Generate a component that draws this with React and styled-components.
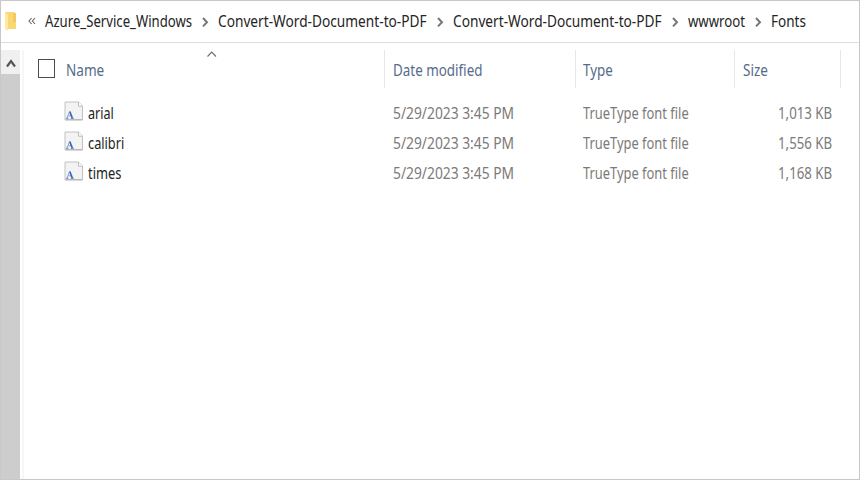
import React, { useLayoutEffect, useRef, useState } from "react";
import styled, { createGlobalStyle } from "styled-components";

const GlobalStyle = createGlobalStyle`
  * { box-sizing: border-box; }
  body { margin: 0; background: #fff; }
`;

const Window = styled.main`
  width: 860px;
  height: 480px;
  display: flex;
  flex-direction: column;
  overflow: hidden;
  background: #fff;
  border: 1px solid #c8c8c8;
  font-family: "Noto Sans", "Open Sans", sans-serif;
  font-size: 16.8px;
  line-height: 22px;
`;

const AddressBar = styled.nav`
  height: 42px;
  flex: none;
  display: flex;
  align-items: center;
  padding: 0 0 2px 4px;
  border-bottom: 1px solid #dedede;
  color: #242424;
`;

const FolderIcon = styled.svg`
  width: 12px;
  height: 20px;
  flex: none;
  margin-right: 11px;
`;

const Overflow = styled.svg`
  width: 8px;
  height: 8px;
  flex: none;
  margin-right: 9px;
`;

const Separator = styled.svg`
  width: 26px;
  height: 12px;
  flex: none;
  margin-top: 2px;
`;

const Body = styled.div`
  flex: 1;
  display: flex;
  padding-top: 7px;
`;

const ScrollTrack = styled.aside`
  width: 19px;
  flex: none;
  display: flex;
  flex-direction: column;
  background: #cdcdcd;
`;

const ScrollButton = styled.div`
  height: 24px;
  flex: none;
  display: flex;
  align-items: center;
  justify-content: center;
  padding-top: 2px;
  background: #f0f0f0;
`;

const Listing = styled.section`
  flex: 1;
  margin-left: 2px;
  border-left: 2px solid #f7f7f7;
`;

const columns = "361px 190.5px 159.5px 106px";

const Header = styled.div`
  height: 38px;
  display: grid;
  grid-template-columns: ${columns};
  color: #566c8a;
`;

const HeaderCell = styled.div`
  display: flex;
  align-items: center;
  padding: 1px 0 0 7.5px;
  border-right: 1px solid #e6e6e6;
`;

const NameHeader = styled(HeaderCell)`
  position: relative;
  padding-left: 14px;
`;

const Checkbox = styled.span`
  width: 17px;
  height: 19px;
  margin: -2px 10.5px 0 0;
  border: 1px solid #4d4d4d;
  background: #fff;
`;

const SortArrow = styled.svg`
  position: absolute;
  left: 182px;
  top: 0;
  width: 12px;
  height: 8px;
`;

const Rows = styled.div`
  padding-top: 10px;
`;

const Row = styled.div`
  height: 30px;
  display: grid;
  grid-template-columns: ${columns};
  align-items: center;
  color: #7c7a78;
`;

const FileName = styled.div`
  display: flex;
  align-items: center;
  padding-left: 40px;
  color: #242424;
`;

const FileIcon = styled.svg`
  width: 20px;
  height: 20px;
  margin: -5px 4px 0 0;
`;

const Cell = styled.div`
  display: flex;
  padding-left: 7.5px;
`;

const SizeCell = styled(Cell)`
  justify-content: flex-end;
  padding-right: 9px;
`;

const LabelBox = styled.span`
  display: block;
  flex: none;
  width: ${(p) => p.$width}px;
  height: 22px;
  white-space: nowrap;
`;

const LabelText = styled.span`
  display: inline-block;
  transform-origin: 0 50%;
`;

/* Condenses a label horizontally so that it fills its given width. */
function Label({ width, children }) {
  const ref = useRef(null);
  const [scale, setScale] = useState(1);
  useLayoutEffect(() => {
    setScale(width / ref.current.offsetWidth);
  }, [width, children]);
  return (
    <LabelBox $width={width}>
      <LabelText ref={ref} style={{ transform: `scaleX(${scale})` }}>{children}</LabelText>
    </LabelBox>
  );
}

const crumbs = [
  ["Azure_Service_Windows", 147.4],
  ["Convert-Word-Document-to-PDF", 208.8],
  ["Convert-Word-Document-to-PDF", 208.8],
  ["wwwroot", 57.4],
  ["Fonts", 34.6],
];

const files = [
  ["arial", 25.5, "1,013 KB"],
  ["calibri", 36.5, "1,556 KB"],
  ["times", 33.7, "1,168 KB"],
];

function FontFile() {
  return (
    <FileIcon viewBox="0 0 20 20">
      <path d="M1 1H14.5L18.5 5V19H1Z" fill="#f3f3f3" stroke="#c2c2c2" />
      <path d="M1.5 18.7H18.5" stroke="#b2b2b2" />
      <path d="M14.5 1V5.2H18.5" fill="#fff" stroke="#bcbcbc" />
      <path d="M3 17L5.6 10.5M4.2 14.8H7.6" fill="none" stroke="#86a3d8" />
      <path d="M5.8 10.5L8.3 17" fill="none" stroke="#3968bd" strokeWidth="1.7" />
      <path d="M2.2 17.3H4.3M6.8 17.3H9.8" fill="none" stroke="#5079c4" />
    </FileIcon>
  );
}

export default function App() {
  return (
    <>
      <GlobalStyle />
      <Window>
        <AddressBar>
          <FolderIcon viewBox="0 0 12 20">
            <path d="M0 1H9L11 3V18H3L0 16Z" fill="#f8d775" />
            <path d="M8 2H11V11H8Z" fill="#f2ca5e" />
            <path d="M0 1L3 4V20L0 18Z" fill="#ffe9a2" />
          </FolderIcon>
          <Overflow viewBox="0 0 8 8">
            <path d="M3.6 1L1 4L3.6 7M7 1L4.4 4L7 7" fill="none" stroke="#666" strokeWidth="1.1" />
          </Overflow>
          {crumbs.map(([name, width], i) => (
            <React.Fragment key={i}>
              {i > 0 && (
                <Separator viewBox="0 0 26 12">
                  <path d="M11 2L15 6.2L11 10.4" fill="none" stroke="#777" strokeWidth="2" />
                </Separator>
              )}
              <Label width={width}>{name}</Label>
            </React.Fragment>
          ))}
        </AddressBar>
        <Body>
          <ScrollTrack>
            <ScrollButton>
              <svg width="12" height="12" viewBox="0 0 12 12">
                <path d="M2 9.5L6 4L10 9.5" fill="none" stroke="#555" strokeWidth="2.2" />
              </svg>
            </ScrollButton>
          </ScrollTrack>
          <Listing>
            <Header>
              <NameHeader>
                <Checkbox />
                <Label width={38}>Name</Label>
                <SortArrow viewBox="0 0 12 8">
                  <path d="M1.5 6.5L5.7 2L10 6.5" fill="none" stroke="#6c6c6c" strokeWidth="1.1" />
                </SortArrow>
              </NameHeader>
              <HeaderCell><Label width={89.5}>Date modified</Label></HeaderCell>
              <HeaderCell><Label width={29.5}>Type</Label></HeaderCell>
              <HeaderCell><Label width={25}>Size</Label></HeaderCell>
            </Header>
            <Rows>
              {files.map(([name, width, size]) => (
                <Row key={name}>
                  <FileName><FontFile /><Label width={width}>{name}</Label></FileName>
                  <Cell><Label width={121}>5/29/2023 3:45 PM</Label></Cell>
                  <Cell><Label width={106}>TrueType font file</Label></Cell>
                  <SizeCell><Label width={54.5}>{size}</Label></SizeCell>
                </Row>
              ))}
            </Rows>
          </Listing>
        </Body>
      </Window>
    </>
  );
}
